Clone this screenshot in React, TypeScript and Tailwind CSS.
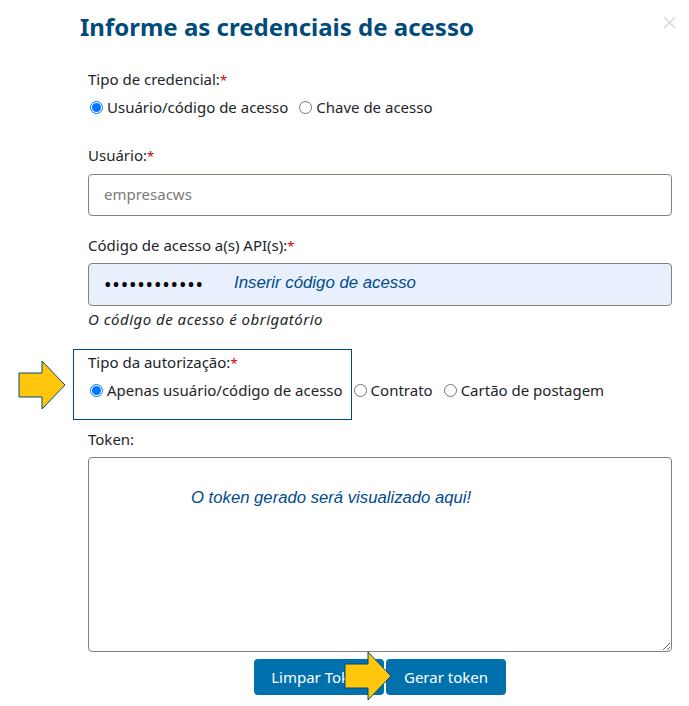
import React from "react";

const F = "font-['Noto_Sans',sans-serif]";

function Arrow({ className }: { className: string }) {
  return (
    <svg className={className} width="48" height="50" viewBox="0 0 48 50">
      <path d="M1 13H24V1L47 25L24 49V37H1Z" fill="#ffc60b" stroke="#004b7c" strokeWidth="1" />
    </svg>
  );
}

function Radio({ on }: { on?: boolean }) {
  return on ? (
    <span className="flex h-[13px] w-[13px] shrink-0 items-center justify-center rounded-full border border-[#0075ff] bg-white">
      <span className="h-[9px] w-[9px] rounded-full bg-[#0075ff]" />
    </span>
  ) : (
    <span className="h-[13px] w-[13px] shrink-0 rounded-full border border-[#767676] bg-white" />
  );
}

function Option({ on, label }: { on?: boolean; label: string }) {
  return (
    <span className="flex items-center gap-[4px]">
      <Radio on={on} />
      <span>{label}</span>
    </span>
  );
}

function Label({ text, star = true }: { text: string; star?: boolean }) {
  return (
    <div className="h-[22px] leading-[22px] text-[#212529]">
      {text}
      {star && <span className="text-[13px] text-[#cc0000]">*</span>}
    </div>
  );
}

export default function App() {
  return (
    <div className={`relative h-[706px] w-[689px] overflow-hidden bg-white text-[15px] text-[#212529] ${F}`}>
      <div className="pl-[80px] pr-[17px]">
        <div className="flex h-[54px] items-start justify-between pt-[11px]">
          <h1 className="text-[24px] font-bold leading-[32px] text-[#004b7c]">Informe as credenciais de acesso</h1>
          <svg className="mt-[5px] mr-[-4px]" width="13" height="13" viewBox="0 0 13 13">
            <path d="M1 1L12 12M12 1L1 12" stroke="#d9d9d9" strokeWidth="1.5" />
          </svg>
        </div>
        <div className="pl-[8px]">
          <div className="mt-[14px]"><Label text="Tipo de credencial:" /></div>
          <div className="mt-[6px] flex h-[22px] items-center gap-[11px] pl-[2px]">
            <Option on label="Usuário/código de acesso" />
            <Option label="Chave de acesso" />
          </div>
          <div className="mt-[26px]"><Label text="Usuário:" /></div>
          <div className="mt-[8px] flex h-[42px] items-center rounded-[4px] border border-[#8a7f73] px-[15px] pb-[2px] text-[#7a7a7a]">empresacws</div>
          <div className="mt-[18px]"><Label text="Código de acesso a(s) API(s):" /></div>
          <div className="mt-[7px] flex h-[43px] items-center rounded-[4px] border border-[#8a7f73] bg-[#e8f0fe] px-[15px]">
            <span className="w-[130px] text-[20px] leading-none tracking-[0.8px] text-black">••••••••••••</span>
            <span className="pb-[4px] font-['Liberation_Sans',sans-serif] text-[16.8px] italic text-[#004b8c]">Inserir código de acesso</span>
          </div>
          <div className="mt-[2px] h-[22px] leading-[22px] italic tracking-[0.5px]">O código de acesso é obrigatório</div>
          <div className="mt-[20px] pt-[1px]"><Label text="Tipo da autorização:" /></div>
          <div className="mt-[6px] flex h-[22px] items-center gap-[11px] pl-[2px]">
            <Option on label="Apenas usuário/código de acesso" />
            <Option label="Contrato" />
            <Option label="Cartão de postagem" />
          </div>
          <div className="mt-[27px]"><Label text="Token:" star={false} /></div>
          <textarea
            readOnly
            placeholder="O token gerado será visualizado aqui!"
            className="mt-[7px] block h-[195px] w-full rounded-[4px] border border-[#8a7f73] pl-[102px] pt-[27px] font-['Liberation_Sans',sans-serif] text-[16.7px] italic outline-none placeholder:text-[#004b8c] placeholder:opacity-100"
          />
          <div className="mt-[7px] flex justify-center gap-[2px]">
            <button className="h-[36px] w-[130px] rounded-[4px] bg-[#0071ad] text-white">Limpar Token</button>
            <button className="h-[36px] w-[120px] rounded-[4px] bg-[#0071ad] text-white">Gerar token</button>
          </div>
        </div>
      </div>
      <div className="absolute left-[73px] top-[349px] h-[71px] w-[279px] border border-[#004b7c]" />
      <Arrow className="absolute left-[18px] top-[360px]" />
      <Arrow className="absolute left-[344px] top-[651px]" />
    </div>
  );
}
